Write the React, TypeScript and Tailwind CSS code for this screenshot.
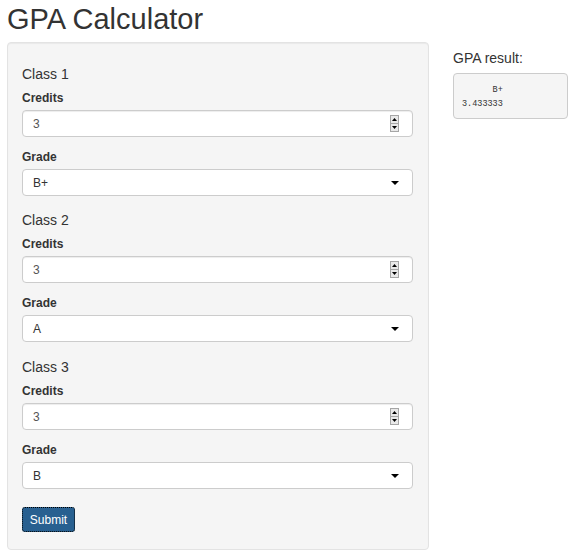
import React from 'react';

const classes = [
  { id: 1, credits: '3', grade: 'B+' },
  { id: 2, credits: '3', grade: 'A' },
  { id: 3, credits: '3', grade: 'B' },
];

const Spinner = () => (
  <div className="flex flex-col w-[9px] h-[17px] border border-[#a6a6a6] bg-[#e9e9e9]">
    <div className="flex-1 flex items-center justify-center border-b border-[#a6a6a6]">
      <svg width="5" height="3" viewBox="0 0 5 3">
        <path d="M2.5 0L5 3H0z" fill="#000" />
      </svg>
    </div>
    <div className="flex-1 flex items-center justify-center">
      <svg width="5" height="3" viewBox="0 0 5 3">
        <path d="M0 0H5L2.5 3z" fill="#000" />
      </svg>
    </div>
  </div>
);

const ClassBlock = ({ id, credits, grade, spacing }: { id: number; credits: string; grade: string; spacing: string }) => (
  <div className={spacing}>
    <h4 className="text-[14px] leading-[20px]">Class {id}</h4>
    <label className="block mt-[6px] text-[12px] leading-[16px] font-bold">Credits</label>
    <div className="mt-[4px] flex items-center justify-between h-[27px] rounded border border-[#ccc] bg-white pl-[10px] pr-[13px] text-[12px] text-[#555] shadow-[inset_0_1px_1px_rgba(0,0,0,0.075)]">
      <span>{credits}</span>
      <Spinner />
    </div>
    <label className="block mt-[12px] text-[12px] leading-[16px] font-bold">Grade</label>
    <div className="mt-[4px] flex items-center justify-between h-[27px] rounded border border-[#ccc] bg-white pl-[10px] pr-[13px] text-[12px] text-[#333]">
      <span>{grade}</span>
      <svg width="8" height="4" viewBox="0 0 8 4">
        <path d="M0 0H8L4 4z" fill="#000" />
      </svg>
    </div>
  </div>
);

const blockSpacing = ['', 'mt-[14px]', 'mt-[15px]'];

export default function App() {
  return (
    <div className="w-[572px] h-[555px] overflow-hidden bg-white pl-[7px] font-['Liberation_Sans',Arial,sans-serif] text-[#333]">
      <h1 className="mt-[2px] text-[29px] leading-[34px] font-normal">GPA Calculator</h1>
      <div className="mt-[6px] flex gap-[24px]">
        <div className="w-[422px] rounded border border-[#e3e3e3] bg-[#f5f5f5] shadow-[inset_0_1px_1px_rgba(0,0,0,0.05)] pt-[21px] pb-[17px] pl-[14px] pr-[15px]">
          {classes.map((c, i) => (
            <ClassBlock key={c.id} id={c.id} credits={c.credits} grade={c.grade} spacing={blockSpacing[i]} />
          ))}
          <button className="mt-[18px] block h-[25px] w-[53px] rounded-[3px] border border-dotted border-black bg-[#286090] text-[12px] text-white">
            Submit
          </button>
        </div>
        <div className="w-[115px]">
          <div className="mt-[6px] text-[14px] leading-[20px]">GPA result:</div>
          <pre className="mt-[5px] rounded border border-[#ccc] bg-[#f5f5f5] pt-[9px] pb-[7px] px-[8px] font-['Liberation_Mono','Courier_New',monospace] text-[8.5px] leading-[14px] text-[#333]">
{'      B+ \n3.433333 '}
          </pre>
        </div>
      </div>
    </div>
  );
}
